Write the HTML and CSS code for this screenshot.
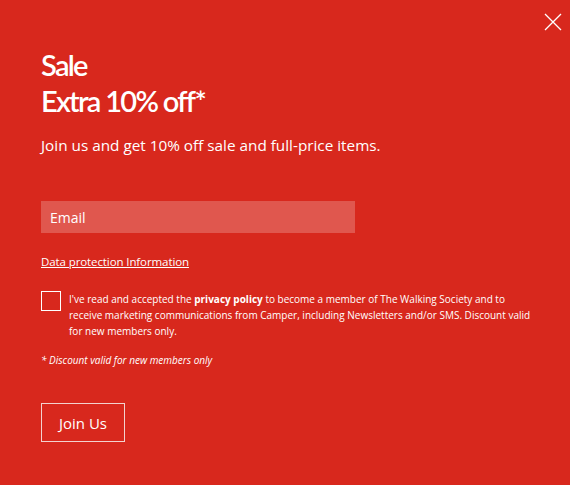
FILE: index.html
```html
<!doctype html>
<html>
<head>
<meta charset="utf-8">
<title>Sale</title>
<link rel="stylesheet" href="styles.css">
</head>
<body>
	<div class="modal">
		<button class="close" type="button" aria-label="Close">
			<svg width="18" height="18" viewBox="0 0 18 18"><path d="M1 1L17 17M17 1L1 17" stroke="#fff" stroke-width="1.3" fill="none"/></svg>
		</button>
		<h1 class="title">Sale<br>Extra 10% off*</h1>
		<p class="lead">Join us and get 10% off sale and full-price items.</p>
		<form class="form">
			<input class="email" type="email" placeholder="Email">
			<a class="data" href="#">Data protection Information</a>
			<label class="check">
				<span class="box"></span>
				<span class="check-text">I've read and accepted the <b>privacy policy</b> to become a member of The Walking Society and to receive marketing communications from Camper, including Newsletters and/or SMS. Discount valid for new members only.</span>
			</label>
			<p class="note">* Discount valid for new members only</p>
			<button class="join" type="button">Join Us</button>
		</form>
	</div>
</body>
</html>
```

FILE: styles.css
```css
*{
	margin:0;
	padding:0;
	box-sizing:border-box;
}
html,body{
	height:100%;
}
body{
	background:#d8281d;
	color:#fff;
	font-family:"Open Sans","Noto Sans",sans-serif;
}
.modal{
	position:relative;
	padding:47px 41px 0;
}
.close{
	position:absolute;
	top:13px;
	right:8px;
	background:none;
	border:0;
	width:18px;
	height:18px;
	cursor:pointer;
}
.close svg{
	display:block;
}
.title{
	font-family:Lato,"Open Sans",sans-serif;
	font-size:29px;
	font-weight:600;
	line-height:36px;
	letter-spacing:-1.7px;
}
.lead{
	margin-top:16px;
	font-size:15.3px;
	line-height:20px;
}
.form{
	display:flex;
	flex-direction:column;
	align-items:flex-start;
}
.email{
	margin-top:46px;
	width:314px;
	height:32px;
	border:0;
	outline:0;
	background:rgba(255,255,255,.22);
	padding:0 9px;
	font-family:inherit;
	font-size:14px;
	color:#fff;
}
.email::placeholder{
	color:#fff;
}
.data{
	margin-top:21px;
	color:#fff;
	font-size:11.5px;
	letter-spacing:-0.1px;
}
.check{
	margin-top:22px;
	display:flex;
	gap:8px;
	width:490px;
}
.box{
	flex:none;
	width:20px;
	height:20px;
	border:1px solid #fff;
}
.check-text{
	font-size:10px;
	line-height:16px;
}
.note{
	margin-top:14px;
	font-size:10px;
	font-style:italic;
}
.join{
	margin-top:36px;
	width:84px;
	height:39px;
	background:none;
	border:1px solid #f3d3cf;
	color:#fff;
	font-family:inherit;
	font-size:15px;
	cursor:pointer;
}
```
